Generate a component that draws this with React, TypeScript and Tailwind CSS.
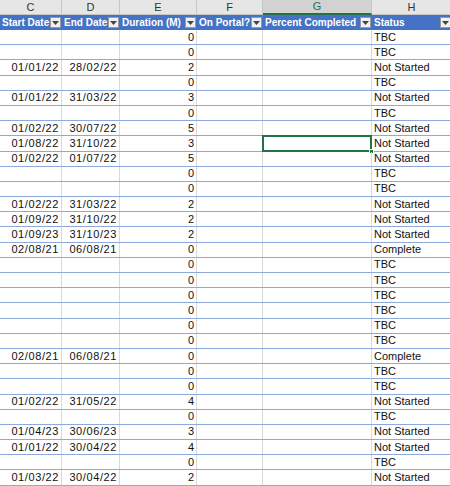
import React from "react";

type Row = [string, string, string, string];

const rows: Row[] = [
  ["", "", "0", "TBC"],
  ["", "", "0", "TBC"],
  ["01/01/22", "28/02/22", "2", "Not Started"],
  ["", "", "0", "TBC"],
  ["01/01/22", "31/03/22", "3", "Not Started"],
  ["", "", "0", "TBC"],
  ["01/02/22", "30/07/22", "5", "Not Started"],
  ["01/08/22", "31/10/22", "3", "Not Started"],
  ["01/02/22", "01/07/22", "5", "Not Started"],
  ["", "", "0", "TBC"],
  ["", "", "0", "TBC"],
  ["01/02/22", "31/03/22", "2", "Not Started"],
  ["01/09/22", "31/10/22", "2", "Not Started"],
  ["01/09/23", "31/10/23", "2", "Not Started"],
  ["02/08/21", "06/08/21", "0", "Complete"],
  ["", "", "0", "TBC"],
  ["", "", "0", "TBC"],
  ["", "", "0", "TBC"],
  ["", "", "0", "TBC"],
  ["", "", "0", "TBC"],
  ["", "", "0", "TBC"],
  ["02/08/21", "06/08/21", "0", "Complete"],
  ["", "", "0", "TBC"],
  ["", "", "0", "TBC"],
  ["01/02/22", "31/05/22", "4", "Not Started"],
  ["", "", "0", "TBC"],
  ["01/04/23", "30/06/23", "3", "Not Started"],
  ["01/01/22", "30/04/22", "4", "Not Started"],
  ["", "", "0", "TBC"],
  ["01/03/22", "30/04/22", "2", "Not Started"],
];

const cols = "grid grid-cols-[62px_58px_77px_66px_109px_80px]";

function Filter() {
  return (
    <span className="absolute right-[1px] top-[2px] flex h-[11px] w-[11px] items-center justify-center border border-[#9a9a9a] bg-[#f1f1f1]">
      <svg width="7" height="4" viewBox="0 0 7 4">
        <path d="M0 0 L7 0 L3.5 4 Z" fill="#444" />
      </svg>
    </span>
  );
}

function HeadCell({ label }: { label: string }) {
  return (
    <div className="relative flex h-[15px] items-center overflow-hidden whitespace-nowrap pl-[2px] text-[10px] font-bold leading-none text-white">
      {label}
      <Filter />
    </div>
  );
}

export default function App() {
  const letters = ["C", "D", "E", "F", "G", "H"];
  const heads = ["Start Date", "End Date", "Duration (M)", "On Portal?", "Percent Completed", "Status"];
  return (
    <div
      className="h-[486px] w-[450px] overflow-hidden bg-white"
      style={{ fontFamily: '"Liberation Sans", Arial, sans-serif' }}
    >
      <div className="w-[452px]">
        {/* column letters */}
        <div className={`${cols} h-[15px]`}>
          {letters.map((l) =>
            l === "G" ? (
              <div
                key={l}
                className="flex items-center justify-center border-r border-[#c6c6c6] border-b-2 border-b-[#217346] bg-[#d2d2d2] text-[11px] leading-none text-[#217346]"
              >
                {l}
              </div>
            ) : (
              <div
                key={l}
                className="flex items-center justify-center border-r border-b border-[#c6c6c6] bg-[#e6e6e6] text-[11px] leading-none text-[#333]"
              >
                {l}
              </div>
            )
          )}
        </div>
        {/* table header */}
        <div className={`${cols} bg-[#4472c4]`}>
          {heads.map((h) => (
            <HeadCell key={h} label={h} />
          ))}
        </div>
        {/* data rows */}
        {rows.map((r, i) => (
          <div
            key={i}
            className={`${cols} h-[15.2px] border-b border-[#8eaadb] text-[11px] leading-none text-[#111]`}
          >
            <div className="flex items-center justify-end border-r border-[#d9d9d9] pr-[2px] tracking-[0.6px]">
              {r[0]}
            </div>
            <div className="flex items-center justify-end border-r border-[#d9d9d9] pr-[2px] tracking-[0.6px]">
              {r[1]}
            </div>
            <div className="flex items-center justify-end border-r border-[#d9d9d9] pr-[2px]">{r[2]}</div>
            <div className="border-r border-[#d9d9d9]" />
            <div className="relative border-r border-[#d9d9d9]">
              {i === 7 && (
                <div className="absolute left-[-1px] right-[-1px] top-[-1px] bottom-[-1px] border-2 border-[#217346]">
                  <span className="absolute bottom-[-4px] right-[-4px] h-[5px] w-[5px] border border-white bg-[#217346]" />
                </div>
              )}
            </div>
            <div className="flex items-center whitespace-nowrap pl-[2px]">{r[3]}</div>
          </div>
        ))}
      </div>
    </div>
  );
}
